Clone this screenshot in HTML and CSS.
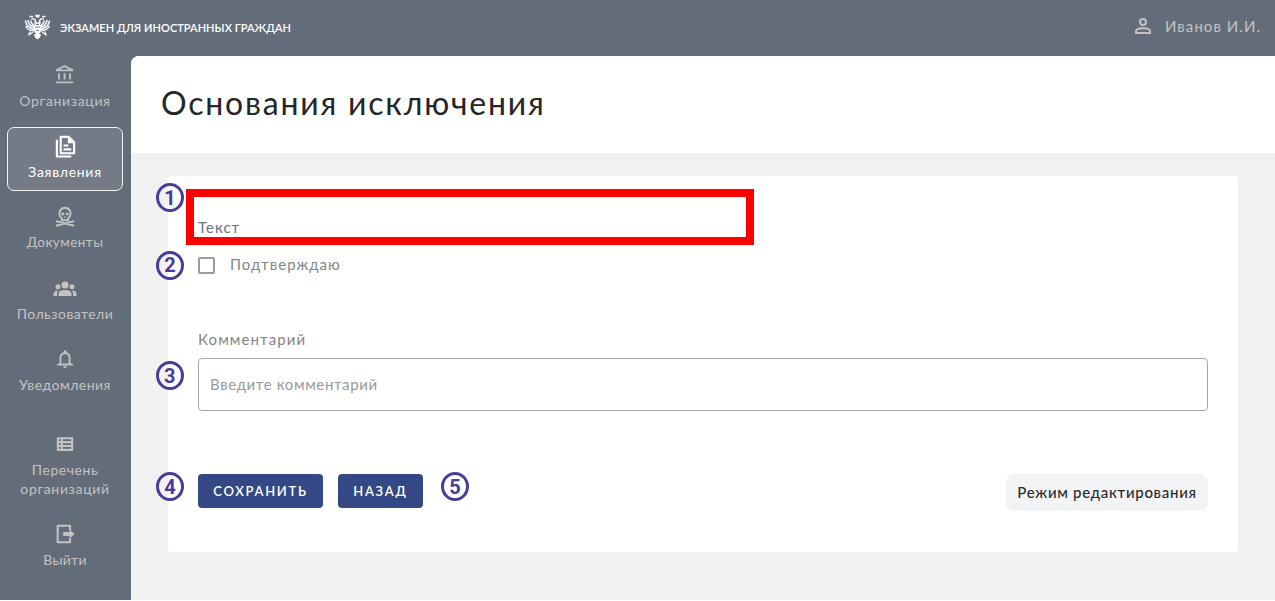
FILE: index.html
```html
<!DOCTYPE html>
<html lang="ru">
<head>
<meta charset="utf-8">
<title>Основания исключения</title>
<link rel="stylesheet" href="styles.css">
</head>
<body>
<div class="app">
  <header class="topbar">
    <svg class="emblem" viewBox="0 0 27 26">
      <g fill="none" stroke="#f7f8f9" stroke-linecap="round">
        <path stroke-width="1.5" d="M10 15Q3 14 1.5 7M10 13Q5 12 4 6.500M10 11.500Q7.500 10 6.800 7M17 15Q24 14 25.500 7M17 13Q22 12 23 6.500M17 11.500Q19.500 10 20.200 7M9 16.500Q4 16.500 2 12.500M18 16.500Q23 16.500 25 12.500"/>
        <path stroke-width="1.300" d="M11.500 11V6.500Q10 4 7.500 5M15.500 11V6.500Q17 4 19.500 5M6 2.500h2.500M18.500 2.500h2.500M9 18l-4 3M18 18l4 3M6 18l-1 2M21 18l1 2"/>
      </g>
      <path fill="#f7f8f9" d="M11 .8h5l-.8 2.700h-3.400zM10.500 6l3 3 3-3v4h-6zM9.500 11h8v5.500q-1 2.500-4 4-3-1.500-4-4zM10 20.500l3.500-1.500 3.500 1.500-1 3-2.500 2-2.500-2z"/>
      <path stroke="#626c79" stroke-width=".8" d="M11 13h5M12 16.500h3"/>
    </svg>
    <span class="brand">ЭКЗАМЕН ДЛЯ ИНОСТРАННЫХ ГРАЖДАН</span>
    <div class="user">
      <svg class="user-icon" viewBox="0 0 16 16" fill="none" stroke="currentColor" stroke-width="2"><circle cx="8" cy="4" r="3"/><path d="M1 15v-1.800q0-2.900 7-2.900t7 2.900V15z"/></svg>
      <span class="user-name">Иванов И.И.</span>
    </div>
  </header>
  <div class="body">
    <nav class="sidebar">
      <a class="item">
        <svg viewBox="0 0 24 24" fill="currentColor"><path d="M6.500 10h-2v7h2zm6 0h-2v7h2zm8.500 9H2v2h19zm-2.500-9h-2v7h2zm-7-6.740L16.710 6H6.290zM11.500 1 2 6v2h19V6z"/></svg>
        <span class="w-org">Организация</span>
      </a>
      <a class="item active">
        <svg class="pages" viewBox="0 0 24 24" fill="none" stroke="currentColor" stroke-width="2.200"><path stroke-linejoin="round" d="M7 2h8.500l5.500 5.500V19H7z"/><path d="M3 5v17.500h15M10 11h5M10 15h8"/><path fill="currentColor" stroke="none" d="M14.500 1.500V8.500h7z"/></svg>
        <span class="w-app">Заявления</span>
      </a>
      <a class="item">
        <svg viewBox="0 0 24 24" fill="none" stroke="currentColor" stroke-width="2.100"><path d="M8.500 15.500v-2.200A6.200 6.200 0 1 1 15.500 13.300v2.200zM2 16.500l20 5M22 16.500l-20 5"/><path fill="currentColor" stroke="none" d="M9.600 7a1.700 1.700 0 1 0 .01 0zM14.400 7a1.700 1.700 0 1 0 .01 0zM12 10.500l1.200 2h-2.400z"/></svg>
        <span class="w-doc">Документы</span>
      </a>
      <a class="item">
        <svg class="group" viewBox="0 0 24 16" fill="currentColor"><circle cx="12" cy="4" r="3.500"/><circle cx="5" cy="5.700" r="2.500"/><circle cx="19" cy="5.700" r="2.500"/><path d="M5.500 15v-2q0-4 6.500-4t6.500 4v2zM.5 15v-2q0-3.500 4.700-3.500Q4 10.700 4 12.500V15zM23.500 15v-2q0-3.500-4.700-3.500Q20 10.700 20 12.500V15z"/></svg>
        <span class="w-usr">Пользователи</span>
      </a>
      <a class="item">
        <svg viewBox="0 0 24 24" fill="currentColor"><path d="M12 22c1.100 0 2-.9 2-2h-4c0 1.100.9 2 2 2zm6-6v-5c0-3.070-1.630-5.640-4.500-6.320V4c0-.83-.67-1.500-1.500-1.500s-1.500.67-1.500 1.500v.68C7.640 5.360 6 7.920 6 11v5l-3 2v1h18v-1zm-2 1H8v-6c0-2.480 1.510-4.500 4-4.500s4 2.020 4 4.500z"/></svg>
        <span class="w-ntf">Уведомления</span>
      </a>
      <a class="item two-line">
        <svg viewBox="0 0 24 24" fill="none" stroke="currentColor" stroke-width="2.300"><path d="M4.200 5.800h15.600v12.600H4.200zM8.600 5.500v13M3.500 10h17M3.500 14.200h17"/></svg>
        <span class="w-lst">Перечень</span><span class="w-org">организаций</span>
      </a>
      <a class="item exit">
        <svg viewBox="0 0 24 24"><path fill="none" stroke="currentColor" stroke-width="2.200" stroke-linejoin="round" d="M17.500 7.500V3H4v18h13.500v-4.500"/><path fill="currentColor" d="M10 9.800h7V7l5.500 5-5.500 5v-2.800h-7z"/></svg>
        <span class="w-out">Выйти</span>
      </a>
    </nav>
    <main class="content">
      <div class="heading"><h1>Основания исключения</h1></div>
      <section class="card">
        <div class="field-text"><span class="badge">1</span><span class="text-label">Текст</span></div>
        <label class="confirm"><span class="badge">2</span><span class="checkbox"></span><span class="confirm-label">Подтверждаю</span></label>
        <div class="comment-label">Комментарий</div>
        <div class="comment-box"><span class="badge">3</span><span class="placeholder">Введите комментарий</span></div>
        <div class="actions">
          <span class="badge">4</span>
          <div class="button save"><span>СОХРАНИТЬ</span></div>
          <div class="button back"><span>НАЗАД</span></div>
          <span class="step">5</span>
          <div class="mode"><span>Режим редактирования</span></div>
        </div>
      </section>
    </main>
  </div>
</div>
</body>
</html>
```
FILE: styles.css
```css
* { box-sizing: border-box; }
body { margin: 0; background: #fff; font-family: Lato, "Noto Sans", sans-serif; overflow: hidden; }
.app { height: 600px; background: #636d79; }
.topbar { height: 56px; display: flex; align-items: center; padding: 0 14px 0 24px; }
.emblem { width: 27px; height: 26px; margin-top: -2px; }
.brand { margin: -2px 0 0 9px; color: #fff; font-size: 11px; font-weight: 600; letter-spacing: .04px; white-space: nowrap; }
.user { margin-left: auto; margin-top: -5px; display: flex; align-items: center; color: #c3c2c2; font-size: 15px; letter-spacing: 1.050px; }
.user-icon { width: 16px; height: 16px; margin: 1px 14px 0 0; }
.body { display: flex; height: 544px; }
.sidebar { width: 131px; padding: 0 8px 0 7px; display: flex; flex-direction: column; flex: none; color: #c3c2c2; }
.item { height: 64px; margin-bottom: 7px; display: flex; flex-direction: column; align-items: center; padding-top: 7px; width: 116px; border: 1px solid transparent; font-size: 14px; line-height: 19px; white-space: nowrap; }
.item svg { width: 22px; height: 22px; margin-bottom: 5px; }
.item svg.pages { width: 23px; height: 23px; margin-bottom: 4px; }
.item svg.group { width: 24px; height: 16px; margin: 4px 0 7px; }
.w-org { letter-spacing: .65px; }
.w-app { letter-spacing: .7px; }
.w-doc { font-size: 13.500px; letter-spacing: .45px; }
.w-usr, .w-ntf { letter-spacing: .45px; }
.w-lst { letter-spacing: .55px; }
.w-out { letter-spacing: .25px; }
.active { color: #fff; background: #747b87; border-color: #f1f2f3; border-radius: 7px; }
.item.two-line { height: 83px; margin-top: 14px; }
.content { flex: 1; background: #f1f1f1; border-top-left-radius: 8px; overflow: hidden; }
.heading { height: 97px; background: #fff; padding: 27px 30px; }
h1 { margin: 0; font-size: 32px; font-weight: 400; line-height: 40px; letter-spacing: 1.800px; color: #252627; white-space: nowrap; }
.card { margin: 23px 37px 0; height: 376px; background: #fff; border-radius: 4px; padding: 13px 30px 0; color: #858585; }
.badge { position: absolute; left: -42px; }
.badge, .step { width: 28px; height: 29px; border: 3px solid #473c98; border-radius: 50%; display: flex; align-items: center; justify-content: center; color: #473c98; font: bold 20px/1 Roboto, sans-serif; }
.field-text { position: relative; width: 568px; height: 56px; margin-left: -12px; border: 8px solid #f00; padding: 20px 0 0 4px; }
.field-text .badge { left: -38px; top: -14px; }
.text-label { display: block; font-size: 15px; line-height: 20px; letter-spacing: 1px; color: #6b707e; }
.confirm { position: relative; display: flex; align-items: center; height: 40px; }
.checkbox { width: 17px; height: 17px; border: 2px solid #9b9b9b; border-radius: 2px; }
.confirm-label { margin: -2px 0 0 15px; font-size: 15px; letter-spacing: 1.050px; }
.comment-label { margin-top: 44px; height: 29px; font-size: 15px; line-height: 20px; letter-spacing: 1.100px; }
.comment-box { position: relative; height: 53px; display: flex; align-items: center; padding-left: 11px; border: 1px solid #a6a6a6; border-radius: 4px; font-size: 15px; letter-spacing: .62px; color: #999; }
.placeholder { margin-top: -2px; }
.comment-box .badge { left: -43px; top: 2px; }
.actions { position: relative; display: flex; align-items: flex-start; margin-top: 63px; }
.actions .badge { top: -2px; }
.button { height: 34px; display: flex; align-items: center; justify-content: center; border-radius: 4px; background: #344885; color: #fff; font-size: 13px; font-weight: 600; letter-spacing: 1.700px; white-space: nowrap; }
.save { width: 125px; margin-right: 15px; }
.back { width: 85px; margin-right: 18px; }
.step { margin-top: -2px; }
.mode { width: 202px; height: 37px; margin-left: auto; display: flex; align-items: center; justify-content: center; border-radius: 8px; background: #f2f3f5; color: #292929; font-size: 15px; font-weight: 500; letter-spacing: .7px; white-space: nowrap; }
.mode span { margin-top: -2px; }
```
